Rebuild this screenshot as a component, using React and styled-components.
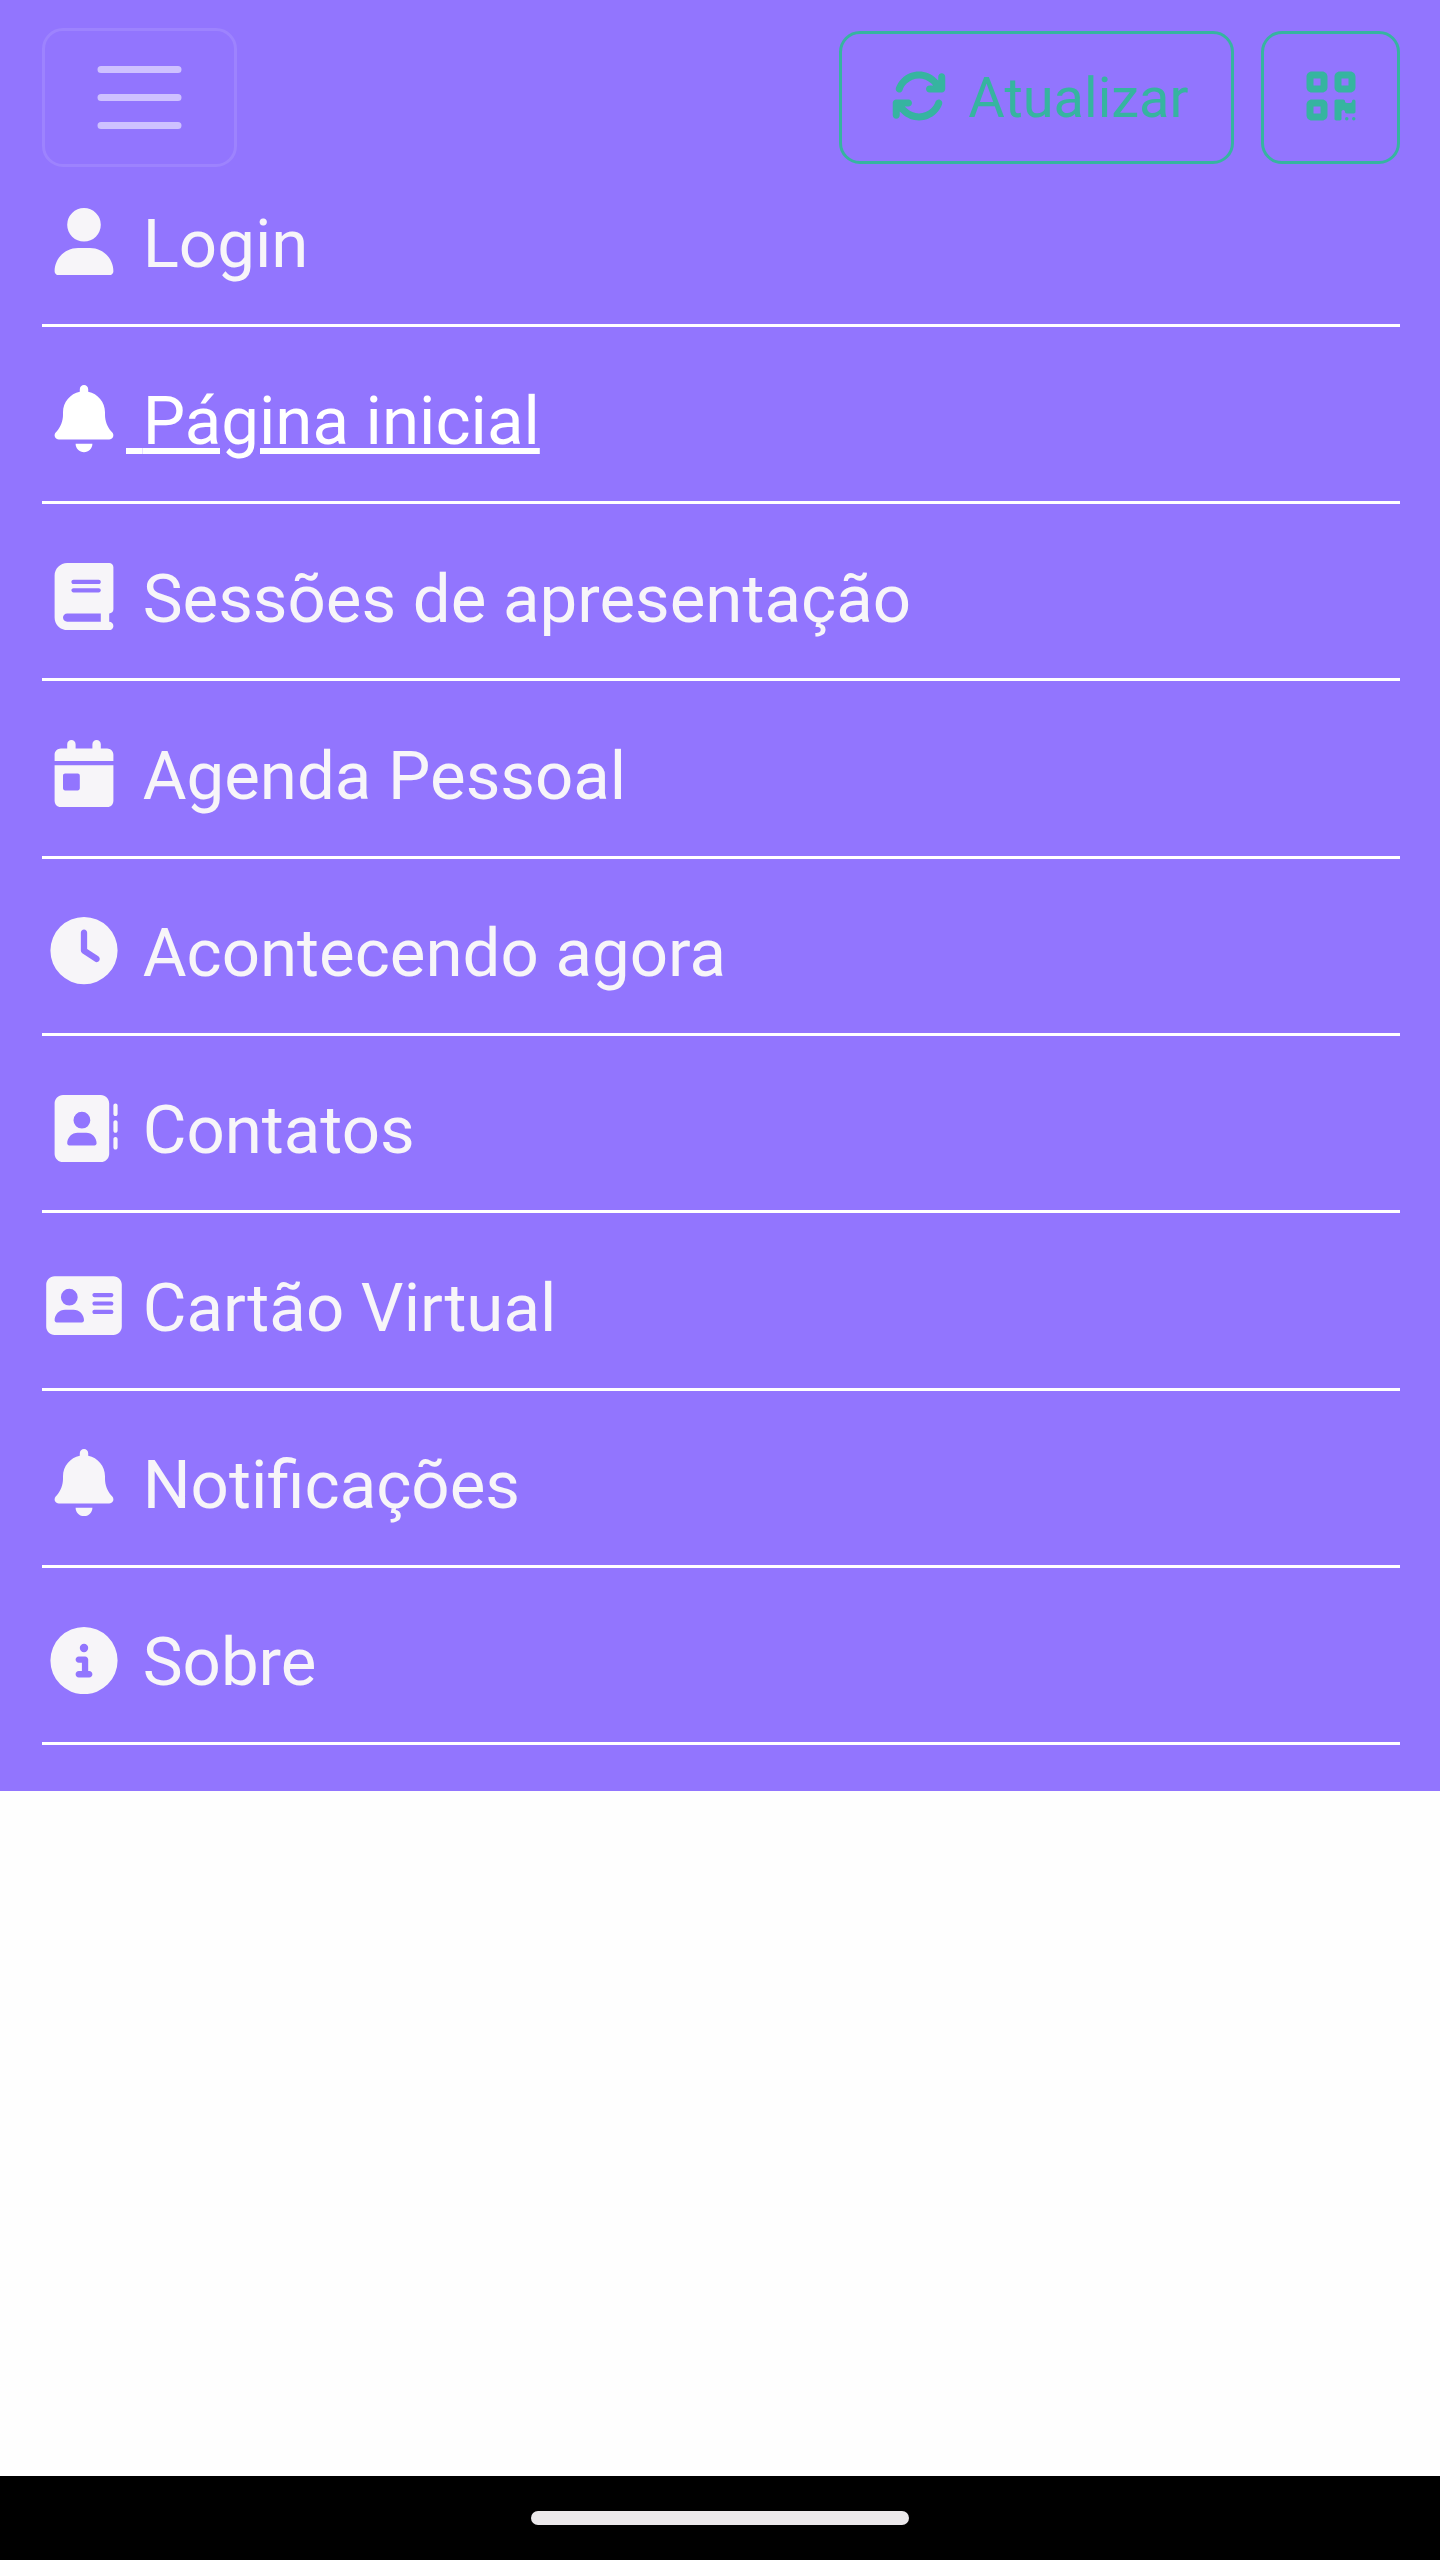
import React from "react";
import styled, { createGlobalStyle } from "styled-components";
import {
  FaAddressBook,
  FaAddressCard,
  FaArrowsRotate,
  FaBell,
  FaBook,
  FaCalendarDay,
  FaCircleInfo,
  FaClock,
  FaQrcode,
  FaUser,
} from "react-icons/fa6";

const menuItems = [
  { label: "Login", icon: FaUser },
  { label: "Página inicial", icon: FaBell, active: true },
  { label: "Sessões de apresentação", icon: FaBook },
  { label: "Agenda Pessoal", icon: FaCalendarDay },
  { label: "Acontecendo agora", icon: FaClock },
  { label: "Contatos", icon: FaAddressBook },
  { label: "Cartão Virtual", icon: FaAddressCard },
  { label: "Notificações", icon: FaBell },
  { label: "Sobre", icon: FaCircleInfo },
];

function App() {
  return (
    <Screen>
      <GlobalStyle />
      <Navbar>
        <Toolbar>
          <Toggler aria-label="Menu">
            <svg viewBox="0 0 30 30">
              <path
                stroke="rgba(255, 255, 255, 0.55)"
                strokeLinecap="round"
                strokeMiterlimit="10"
                strokeWidth="2"
                d="M4 7h22M4 15h22M4 23h22"
              />
            </svg>
          </Toggler>
          <Actions>
            <OutlineButton $width={395}>
              <FaArrowsRotate /> Atualizar
            </OutlineButton>
            <OutlineButton $width={139} aria-label="QR Code">
              <FaQrcode />
            </OutlineButton>
          </Actions>
        </Toolbar>

        <Menu>
          {menuItems.map(({ label, icon: Icon, active }) => (
            <MenuItem key={label}>
              <MenuLink href="#" $active={active}>
                <Icon />
                <span> {label}</span>
              </MenuLink>
            </MenuItem>
          ))}
        </Menu>
      </Navbar>
      <Content />
      <GestureBar>
        <GestureHandle />
      </GestureBar>
    </Screen>
  );
}

export default App;

const GlobalStyle = createGlobalStyle`
  * {
    box-sizing: border-box;
  }

  body {
    margin: 0;
    font-family: Roboto, sans-serif;
    background: #fefefe;
  }
`;

const Screen = styled.div`
  display: flex;
  flex-direction: column;
  width: 1440px;
  height: 2560px;
`;

const Navbar = styled.nav`
  flex: none;
  height: 1791px;
  padding: 28px 40px 0 42px;
  background: #9275fe;
`;

const Toolbar = styled.div`
  display: flex;
  align-items: center;
  justify-content: space-between;
  height: 139px;
`;

const Toggler = styled.button`
  display: flex;
  align-items: center;
  justify-content: center;
  width: 195px;
  height: 139px;
  padding: 0;
  border: 3px solid rgba(255, 255, 255, 0.1);
  border-radius: 21px;
  background: transparent;

  > svg {
    width: 105px;
    height: 105px;
    fill: none;
  }
`;

const Actions = styled.div`
  display: flex;
  gap: 27px;
`;

const OutlineButton = styled.button`
  width: ${(props) => props.$width}px;
  height: 133px;
  padding: 0;
  border: 3.5px solid #36b4a0;
  border-radius: 21px;
  background: transparent;
  color: #36b4a0;
  font-family: inherit;
  font-size: 56px;
  line-height: 84px;
  text-align: center;

  > svg {
    width: 1.25em;
    vertical-align: -0.125em;
  }
`;

const Menu = styled.ul`
  display: flex;
  flex-direction: column;
  gap: 44.3px;
  margin: 0;
  padding: 26.8px 0 0;
  list-style: none;
`;

const MenuItem = styled.li`
  height: 133px;
  padding-top: 0.15px;
  border-bottom: 3px solid #fff;
`;

const MenuLink = styled.a`
  display: block;
  color: ${(props) => (props.$active ? "#fff" : "#f7f5f9")};
  font-size: 67.2px;
  line-height: 100.8px;
  text-decoration: none;
  white-space: pre;

  > svg {
    width: 1.25em;
    vertical-align: -0.125em;
  }

  > span {
    text-decoration: ${(props) => (props.$active ? "underline" : "none")};
    text-decoration-thickness: 6px;
    text-underline-offset: 4px;
  }
`;

const Content = styled.main`
  flex: 1;
`;

const GestureBar = styled.footer`
  display: flex;
  justify-content: center;
  height: 84px;
  padding-top: 35px;
  background: #000;
`;

const GestureHandle = styled.div`
  width: 378px;
  height: 14px;
  border-radius: 7px;
  background: #ece9eb;
`;
